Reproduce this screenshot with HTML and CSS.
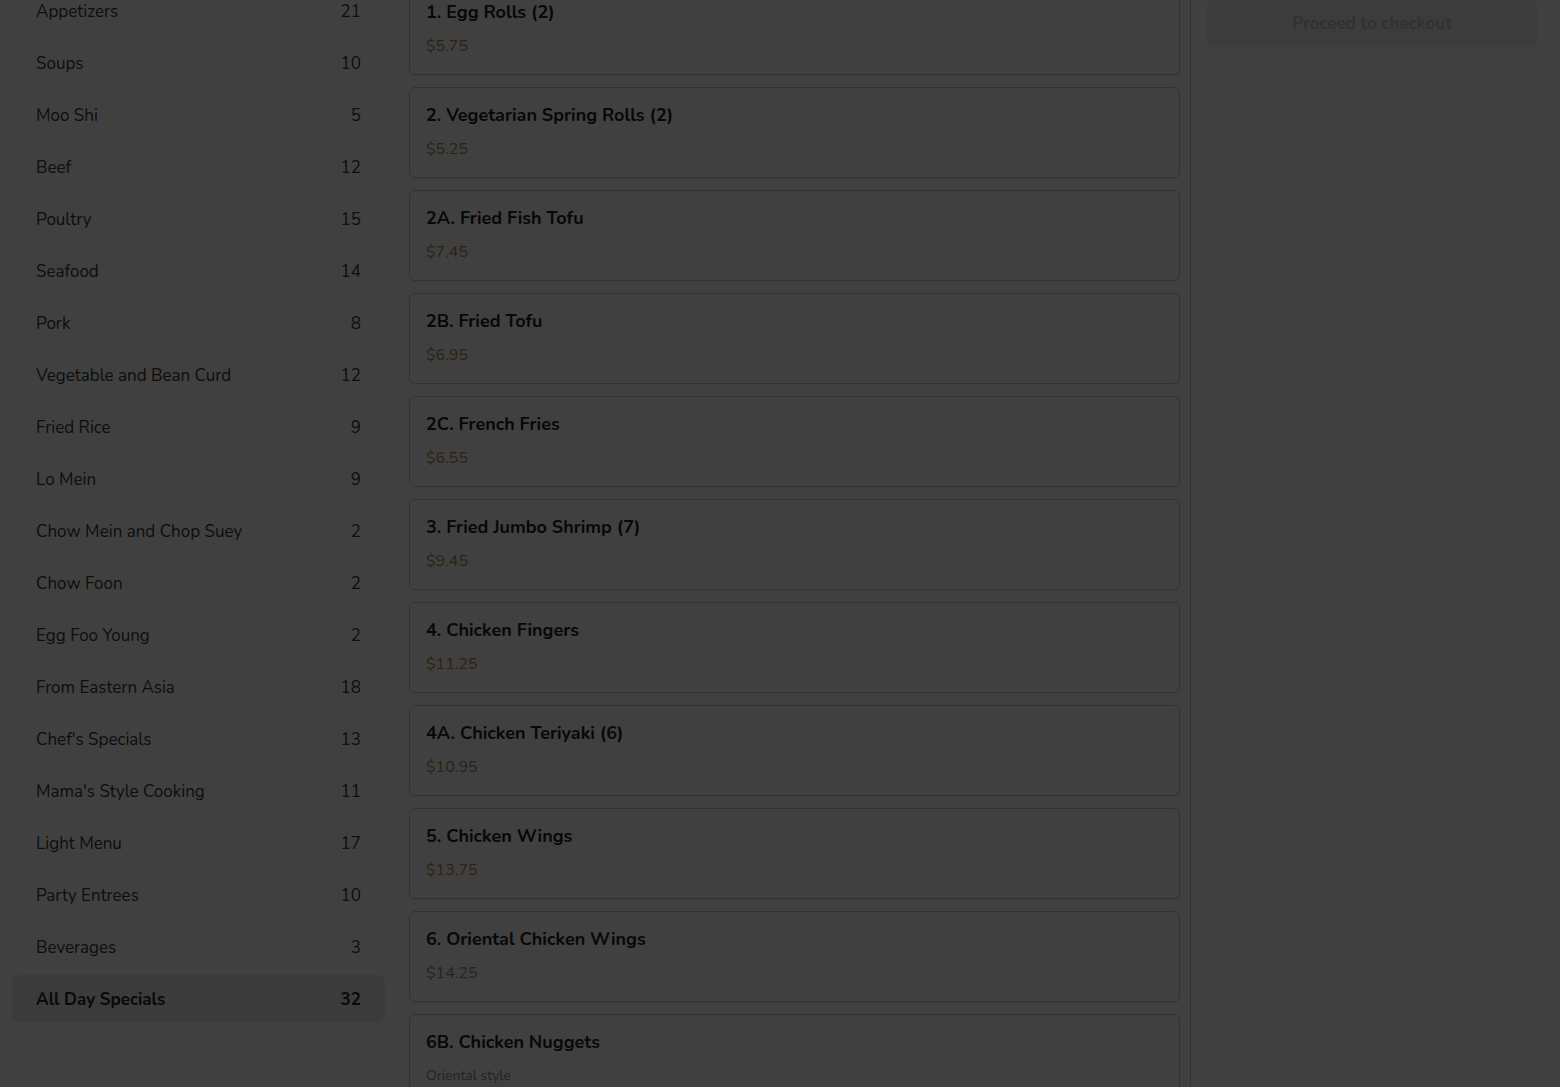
FILE: index.html
```html
<!DOCTYPE html>
<html lang="en">
<head>
    <meta charset="UTF-8">
    <meta name="viewport" content="width=device-width, initial-scale=1.0">
    <title>Order Online</title>
    <link rel="stylesheet" href="styles.css">
</head>
<body>
    <div class="page">
        <nav class="categories">
            <a class="category"><span>Appetizers</span><span>21</span></a>
            <a class="category"><span>Soups</span><span>10</span></a>
            <a class="category"><span>Moo Shi</span><span>5</span></a>
            <a class="category"><span>Beef</span><span>12</span></a>
            <a class="category"><span>Poultry</span><span>15</span></a>
            <a class="category"><span>Seafood</span><span>14</span></a>
            <a class="category"><span>Pork</span><span>8</span></a>
            <a class="category"><span>Vegetable and Bean Curd</span><span>12</span></a>
            <a class="category"><span>Fried Rice</span><span>9</span></a>
            <a class="category"><span>Lo Mein</span><span>9</span></a>
            <a class="category"><span>Chow Mein and Chop Suey</span><span>2</span></a>
            <a class="category"><span>Chow Foon</span><span>2</span></a>
            <a class="category"><span>Egg Foo Young</span><span>2</span></a>
            <a class="category"><span>From Eastern Asia</span><span>18</span></a>
            <a class="category"><span>Chef's Specials</span><span>13</span></a>
            <a class="category"><span>Mama's Style Cooking</span><span>11</span></a>
            <a class="category"><span>Light Menu</span><span>17</span></a>
            <a class="category"><span>Party Entrees</span><span>10</span></a>
            <a class="category"><span>Beverages</span><span>3</span></a>
            <a class="category active"><span>All Day Specials</span><span>32</span></a>
        </nav>

        <main class="menu">
            <div class="item">
                <h3>1. Egg Rolls (2)</h3>
                <div class="price">$5.75</div>
            </div>
            <div class="item">
                <h3>2. Vegetarian Spring Rolls (2)</h3>
                <div class="price">$5.25</div>
            </div>
            <div class="item">
                <h3>2A. Fried Fish Tofu</h3>
                <div class="price">$7.45</div>
            </div>
            <div class="item">
                <h3>2B. Fried Tofu</h3>
                <div class="price">$6.95</div>
            </div>
            <div class="item">
                <h3>2C. French Fries</h3>
                <div class="price">$6.55</div>
            </div>
            <div class="item">
                <h3>3. Fried Jumbo Shrimp (7)</h3>
                <div class="price">$9.45</div>
            </div>
            <div class="item">
                <h3>4. Chicken Fingers</h3>
                <div class="price">$11.25</div>
            </div>
            <div class="item">
                <h3>4A. Chicken Teriyaki (6)</h3>
                <div class="price">$10.95</div>
            </div>
            <div class="item">
                <h3>5. Chicken Wings</h3>
                <div class="price">$13.75</div>
            </div>
            <div class="item">
                <h3>6. Oriental Chicken Wings</h3>
                <div class="price">$14.25</div>
            </div>
            <div class="item">
                <h3>6B. Chicken Nuggets</h3>
                <p class="desc">Oriental style</p>
            </div>
        </main>

        <aside class="cart">
            <button class="checkout" disabled>Proceed to checkout</button>
        </aside>
    </div>

    <div class="backdrop"></div>
</body>
</html>
```

FILE: styles.css
```css
body
{
    margin: 0;
    font-family: Nunito, Lato, "Noto Sans", sans-serif;
    background-color: #ffffff;
    color: #333;
    overflow: hidden;
}
.page
{
    display: flex;
    align-items: stretch;
    margin-top: -16px;
    min-height: 1200px;
}

/* category list */
.categories
{
    width: 373px;
    flex-shrink: 0;
    padding: 3px 0 0 12px;
    display: flex;
    flex-direction: column;
    gap: 4px;
}
.category
{
    display: flex;
    justify-content: space-between;
    align-items: center;
    height: 48px;
    padding: 0 24px;
    border-radius: 8px;
    font-size: 17px;
    color: #383838;
}
.category.active
{
    background-color: #e9e9e9;
    font-weight: 700;
    color: #262626;
}

/* menu items */
.menu
{
    width: 771px;
    flex-shrink: 0;
    margin: 0 10px 0 24px;
    display: flex;
    flex-direction: column;
    gap: 12px;
}
.item
{
    border: 1px solid #c8c8c8;
    border-radius: 6px;
    padding: 15px 16px 17px;
    box-shadow: 0 1px 2px rgba(0, 0, 0, 0.06);
}
.item h3
{
    margin: 0;
    font-size: 18px;
    line-height: 24px;
    font-weight: 700;
    color: #222;
}
.price
{
    margin-top: 11px;
    font-size: 16px;
    line-height: 22px;
    color: #b08a55;
}
.desc
{
    margin: 12px 0 0;
    font-size: 14px;
    line-height: 20px;
    color: #8a8a8a;
}

/* cart panel */
.cart
{
    flex: 1;
    border-left: 1px solid #c8c8c8;
    padding: 16px 23px 0 16px;
}
.checkout
{
    width: 100%;
    height: 47px;
    border: none;
    border-radius: 4px;
    background-color: #f0f0f0;
    color: #c4c4c4;
    font-family: inherit;
    font-size: 17px;
    font-weight: 700;
}

.backdrop
{
    position: fixed;
    inset: 0;
    background-color: rgba(0, 0, 0, 0.75);
}
```
